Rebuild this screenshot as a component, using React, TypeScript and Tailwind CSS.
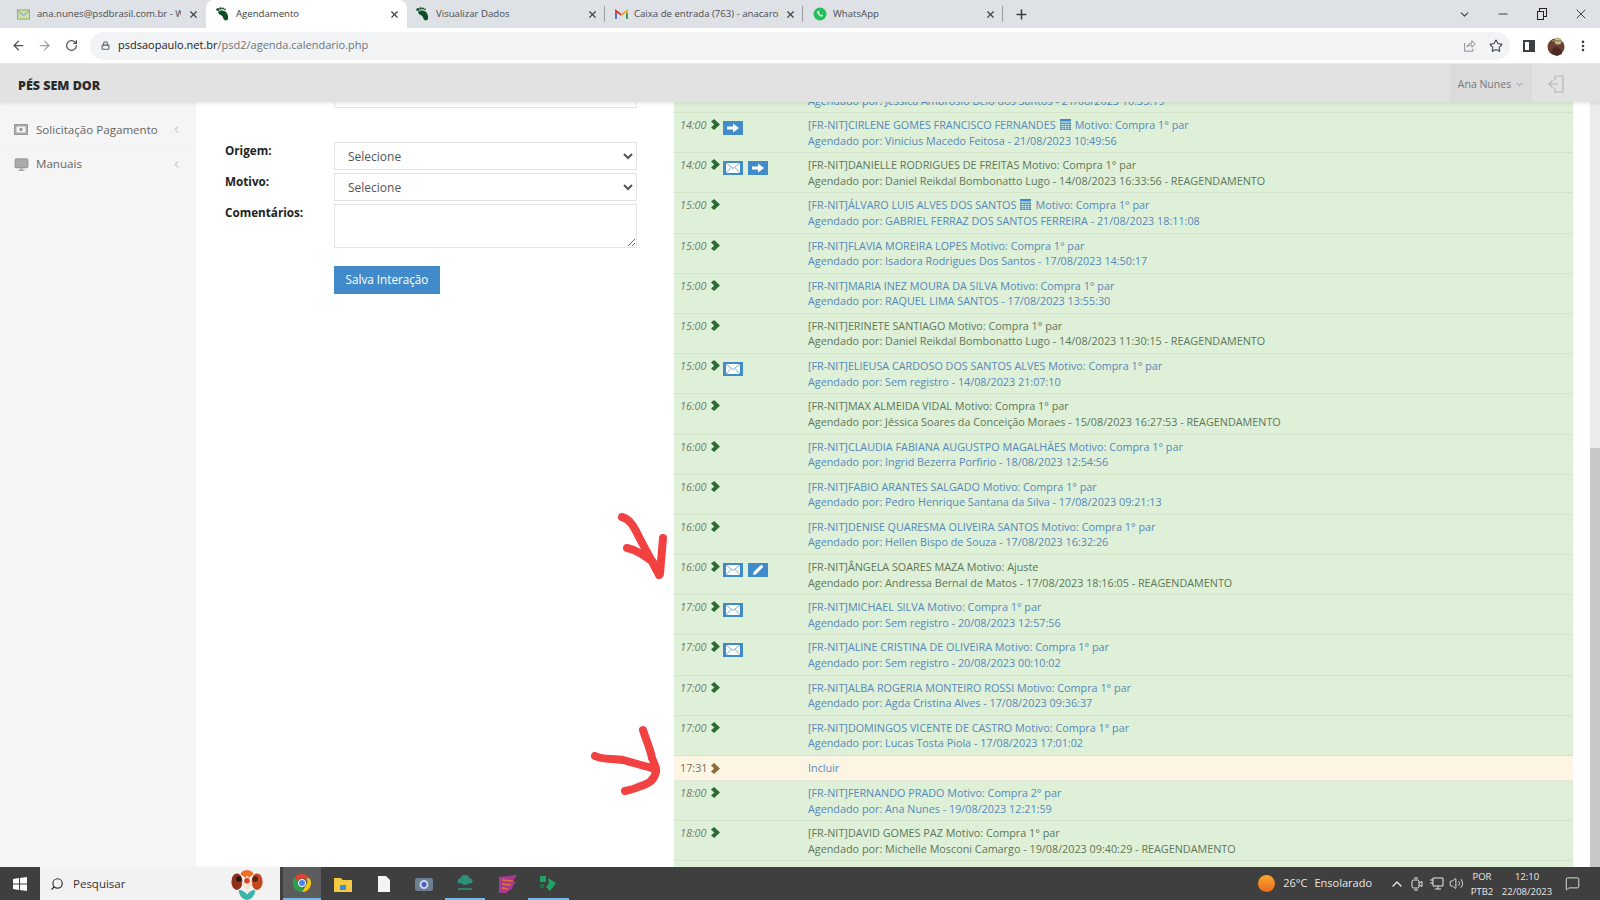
import React from 'react';
import { ArrowLeft, ArrowRight, RotateCw, Lock, Star, MoreVertical, X, Plus, ChevronDown, Minus, ChevronLeft, ChevronUp, Search, Volume2, MessageSquare, Monitor } from 'lucide-react';

const Foot = () => (
  <svg viewBox="0 0 14 14" className="w-[14px] h-[14px] shrink-0">
    <path d="M2.500 4.500C4 3 8 3 10 5c1.800 1.800 2.500 5 2 7-.4 1.500-3 2-4 .5C7 11 7 9.500 5.500 8.500 3.500 7.500 1.500 6 2.500 4.500z" fill="#0f4d26" />
    <circle cx="1.800" cy="2.500" r="1.500" fill="#0f4d26" />
    <circle cx="4.500" cy="1.500" r="1.200" fill="#0f4d26" />
    <circle cx="7" cy="1.500" r="1" fill="#0f4d26" />
    <circle cx="9" cy="2.300" r=".9" fill="#0f4d26" />
  </svg>
);

const MailFav = () => (
  <svg viewBox="0 0 14 14" className="w-[13px] h-[13px] shrink-0">
    <rect x=".5" y="2" width="13" height="10" fill="#c9dfa8" stroke="#9ab04e" />
    <path d="M1 3l6 5 6-5" fill="none" stroke="#6f8fb8" />
  </svg>
);

const GmailFav = () => (
  <svg viewBox="0 0 14 12" className="w-[13px] h-[11px] shrink-0">
    <path d="M1 11V2l6 4.500" fill="none" stroke="#d93a2b" strokeWidth="2" />
    <path d="M13 11V2L7 6.500" fill="none" stroke="#e8a92f" strokeWidth="2" />
    <path d="M1 11V5" stroke="#3f7fe0" strokeWidth="2" />
    <path d="M13 11V5" stroke="#2e9e55" strokeWidth="2" />
  </svg>
);

const WhatsFav = () => (
  <svg viewBox="0 0 14 14" className="w-[14px] h-[14px] shrink-0">
    <circle cx="7" cy="7" r="6.500" fill="#25c05a" />
    <path d="M4.800 4c-.8.800-.6 2.200.5 3.500 1.200 1.400 2.700 2.500 3.800 2 .6-.3.900-.8.900-1.200L8.600 7.500l-.7.700c-.7-.2-1.600-1.100-1.900-1.900l.6-.7L5.700 3.800c-.3 0-.6 0-.9.200z" fill="#fff" />
  </svg>
);

const tabs = [
  { w: 'w-[206px]', icon: <MailFav />, label: 'ana.nunes@psdbrasil.com.br - W', left: 'pl-[17px]', gap: 'gap-[7px]', sep: false, active: false },
  { w: 'w-[201px]', icon: <Foot />, label: 'Agendamento', left: 'pl-[10px]', gap: 'gap-[6px]', sep: false, active: true },
  { w: 'w-[198px]', icon: <Foot />, label: 'Visualizar Dados', left: 'pl-[9px]', gap: 'gap-[6px]', sep: true, active: false },
  { w: 'w-[198px]', icon: <GmailFav />, label: 'Caixa de entrada (763) - anacarol', left: 'pl-[10px]', gap: 'gap-[6px]', sep: true, active: false },
  { w: 'w-[200px]', icon: <WhatsFav />, label: 'WhatsApp', left: 'pl-[10px]', gap: 'gap-[6px]', sep: true, active: false },
];

type Row = { time: string; icons?: string[]; name: string; cal?: boolean; motivo?: string; by: string; dark?: boolean };

const m1 = 'Compra 1° par';
const rows: Row[] = [
  { time: '14:00', icons: ['arrow'], name: 'CIRLENE GOMES FRANCISCO FERNANDES', cal: true, by: 'Vinicius Macedo Feitosa - 21/08/2023 10:49:56' },
  { time: '14:00', icons: ['mail', 'arrow'], name: 'DANIELLE RODRIGUES DE FREITAS', by: 'Daniel Reikdal Bombonatto Lugo - 14/08/2023 16:33:56 - REAGENDAMENTO', dark: true },
  { time: '15:00', name: 'ÁLVARO LUIS ALVES DOS SANTOS', cal: true, by: 'GABRIEL FERRAZ DOS SANTOS FERREIRA - 21/08/2023 18:11:08' },
  { time: '15:00', name: 'FLAVIA MOREIRA LOPES', by: 'Isadora Rodrigues Dos Santos - 17/08/2023 14:50:17' },
  { time: '15:00', name: 'MARIA INEZ MOURA DA SILVA', by: 'RAQUEL LIMA SANTOS - 17/08/2023 13:55:30' },
  { time: '15:00', name: 'ERINETE SANTIAGO', by: 'Daniel Reikdal Bombonatto Lugo - 14/08/2023 11:30:15 - REAGENDAMENTO', dark: true },
  { time: '15:00', icons: ['mail'], name: 'ELIEUSA CARDOSO DOS SANTOS ALVES', by: 'Sem registro - 14/08/2023 21:07:10' },
  { time: '16:00', name: 'MAX ALMEIDA VIDAL', by: 'Jéssica Soares da Conceição Moraes - 15/08/2023 16:27:53 - REAGENDAMENTO', dark: true },
  { time: '16:00', name: 'CLAUDIA FABIANA AUGUSTPO MAGALHÃES', by: 'Ingrid Bezerra Porfirio - 18/08/2023 12:54:56' },
  { time: '16:00', name: 'FABIO ARANTES SALGADO', by: 'Pedro Henrique Santana da Silva - 17/08/2023 09:21:13' },
  { time: '16:00', name: 'DENISE QUARESMA OLIVEIRA SANTOS', by: 'Hellen Bispo de Souza - 17/08/2023 16:32:26' },
  { time: '16:00', icons: ['mail', 'pencil'], name: 'ÂNGELA SOARES MAZA', motivo: 'Ajuste', by: 'Andressa Bernal de Matos - 17/08/2023 18:16:05 - REAGENDAMENTO', dark: true },
  { time: '17:00', icons: ['mail'], name: 'MICHAEL SILVA', by: 'Sem registro - 20/08/2023 12:57:56' },
  { time: '17:00', icons: ['mail'], name: 'ALINE CRISTINA DE OLIVEIRA', by: 'Sem registro - 20/08/2023 00:10:02' },
  { time: '17:00', name: 'ALBA ROGERIA MONTEIRO ROSSI', by: 'Agda Cristina Alves - 17/08/2023 09:36:37' },
  { time: '17:00', name: 'DOMINGOS VICENTE DE CASTRO', by: 'Lucas Tosta Piola - 17/08/2023 17:01:02' },
];
const rowsAfter: Row[] = [
  { time: '18:00', name: 'FERNANDO PRADO', motivo: 'Compra 2° par', by: 'Ana Nunes - 19/08/2023 12:21:59' },
  { time: '18:00', name: 'DAVID GOMES PAZ', by: 'Michelle Mosconi Camargo - 19/08/2023 09:40:29 - REAGENDAMENTO', dark: true },
];

const Chevron = ({ color = '#2f6b35' }: { color?: string }) => (
  <svg viewBox="0 0 10 12" className="w-[9px] h-[11px] shrink-0">
    <path d="M3.500 0L10 6l-6.500 6L0 9.300 3.500 6 0 2.700z" fill={color} />
  </svg>
);

const Tile = ({ kind }: { kind: string }) => (
  <span className="w-5 h-[14px] bg-[#428bca] flex items-center justify-center shrink-0">
    {kind === 'mail' && (
      <svg viewBox="0 0 14 10" className="w-[14px] h-[10px]">
        <rect width="14" height="10" fill="#fff" />
        <path d="M0 0l7 5.500L14 0M0 10l5-5.500M14 10L9 4.500" fill="none" stroke="#6fa3d3" strokeWidth=".9" />
      </svg>
    )}
    {kind === 'arrow' && (
      <svg viewBox="0 0 12 10" className="w-3 h-[10px]">
        <path d="M0 3.500h6V.500L12 5 6 9.500v-3H0z" fill="#fff" />
      </svg>
    )}
    {kind === 'pencil' && (
      <svg viewBox="0 0 12 12" className="w-3 h-3">
        <path d="M1 11l.7-3L8.500 1.200a1 1 0 011.400 0l.9.9a1 1 0 010 1.400L4 10.300z" fill="#fff" />
      </svg>
    )}
  </span>
);

const CalIcon = () => (
  <svg viewBox="0 0 11 11" className="inline-block w-[11px] h-[11px] mx-[4px] align-[-1px]">
    <path d="M0 0h11v2.500H0z" fill="#428bca" />
    <path d="M0 3.500h11V11H0z" fill="#428bca" />
    <path d="M0 5.500h11M0 7.500h11M0 9.300h11M2.800 3.500V11M5.500 3.500V11M8.200 3.500V11" stroke="#dff0d8" strokeWidth=".6" />
  </svg>
);

const RowItem = ({ row }: { row: Row }) => {
  const color = row.dark ? 'text-[#5d7758]' : 'text-[#5589ba]';
  return (
    <div className="h-[40.2px] flex border-b border-[#d3e4cb] pt-[4px] pl-[6px] shrink-0">
      <div className="w-[128px] flex items-start">
        <span className="italic text-[#6f7e6a] w-[31px] leading-[16px]">{row.time}</span>
        <span className="mt-[2px]"><Chevron /></span>
        <span className="flex gap-[5px] ml-[3px] mt-[4px]">
          {(row.icons || []).map((k, i) => <Tile key={i} kind={k} />)}
        </span>
      </div>
      <div className={`leading-[15.5px] ${color}`}>
        <div>
          [FR-NIT]{row.name}
          {row.cal ? <CalIcon /> : ' '}
          Motivo: {row.motivo || m1}
        </div>
        <div>Agendado por: {row.by}</div>
      </div>
    </div>
  );
};

const Flower = () => (
  <svg viewBox="0 0 36 36" className="w-9 h-[33px]">
    <ellipse cx="7" cy="16" rx="6" ry="9" fill="#8c2f1b" />
    <ellipse cx="29" cy="16" rx="6" ry="9" fill="#c2491d" />
    <circle cx="9" cy="13" r="3" fill="#2a1410" />
    <circle cx="27" cy="13" r="3" fill="#5a1f10" />
    <path d="M11 8c1-6 13-6 14 0l-7 5z" fill="#ef6c25" />
    <path d="M18 9l6 9-6 8-6-8z" fill="#f6e3d2" />
    <circle cx="18" cy="15" r="3" fill="#d8412a" />
    <path d="M18 36c-5-1-9-5-9-11 4 0 7 2 9 5 2-3 5-5 9-5 0 6-4 10-9 11z" fill="#39b6a8" />
  </svg>
);

const ChromeLogo = () => (
  <svg viewBox="0 0 20 20" className="w-5 h-5">
    <path d="M10 1a9 9 0 017.800 4.500H10a4.500 4.500 0 00-4.200 3L3 4a9 9 0 017-3z" fill="#e0432f" />
    <path d="M17.800 5.500A9 9 0 0110 19l3.900-6.800a4.500 4.500 0 00.1-6.700z" fill="#f5c518" />
    <path d="M10 19A9 9 0 013 4l3.900 6.800a4.500 4.500 0 004.700 3z" fill="#2f9e4f" />
    <circle cx="10" cy="10" r="3.600" fill="#4a86e8" stroke="#fff" />
  </svg>
);

const App: React.FC = () => {
  return (
    <div className="h-screen w-full flex flex-col overflow-hidden bg-white font-['Open_Sans',sans-serif] text-[12px]">
      {/* Tabs */}
      <div className="h-[28px] bg-[#dee1e6] flex items-stretch shrink-0 text-[#4a4d52] text-[9.6px]">
        {tabs.map((t, i) => (
          <div key={i} className={`${t.w} ${t.left} ${t.gap} ${t.active ? 'bg-white rounded-t-lg text-[#3c4043]' : ''} flex items-center pr-[7px] relative shrink-0`}>
            {t.icon}
            <span className="flex-1 whitespace-nowrap overflow-hidden">{t.label}</span>
            <X size={11} strokeWidth={2.500} className="text-[#3c4043] shrink-0" />
            {t.sep && <span className="absolute right-0 top-[6px] h-[16px] w-px bg-[#9aa0a6]" />}
          </div>
        ))}
        <div className="flex items-center ml-[11px]"><Plus size={15} strokeWidth={2.500} className="text-[#3c4043]" /></div>
        <div className="flex-1 flex items-center justify-end text-[#3c4043] gap-[25px] pr-[11px]">
          <ChevronDown size={13} />
          <Minus size={14} />
          <span className="w-3 h-3 relative">
            <span className="absolute right-0 top-0 w-[8px] h-[9px] border border-[#222]" />
            <span className="absolute left-[2px] bottom-0 w-[7px] h-[9px] border border-[#222] bg-[#dee1e6]" />
          </span>
          <X size={16} strokeWidth={1.500} className="ml-[1px]" />
        </div>
      </div>

      {/* Toolbar */}
      <div className="h-[35px] bg-white flex items-center shrink-0 pl-[11px] text-[#5f6368]">
        <ArrowLeft size={15} strokeWidth={2} className="text-[#4b4e52]" />
        <ArrowRight size={15} strokeWidth={2} className="ml-[11px] text-[#9aa0a6]" />
        <RotateCw size={13} strokeWidth={2.200} className="ml-[13px] text-[#4b4e52]" />
        <div className="ml-[12px] w-[1420px] shrink-0 h-[28px] rounded-full bg-[#f1f3f4] flex items-center pl-[11px] pr-[7px]">
          <Lock size={9} strokeWidth={3} className="text-[#5f6368]" />
          <span className="ml-[8px] text-[11px] text-[#70757a]">
            <span className="text-[#202124]">psdsaopaulo.net.br</span>/psd2/agenda.calendario.php
          </span>
          <span className="flex-1" />
          <svg viewBox="0 0 16 16" className="w-[13px] h-[13px]" fill="none" stroke="#8a8d91" strokeWidth="1.200">
            <path d="M2 5v10h10v-3M5 10c0-3 3-5 6-5V2l4 4-4 4V7.500c-3 0-5 1-6 2.500z" />
          </svg>
          <Star size={14} strokeWidth={2} className="ml-[13px] text-[#4b4e52]" />
        </div>
        <svg viewBox="0 0 12 12" className="ml-[13px] w-3 h-3 shrink-0">
          <rect x="1" y="1" width="10" height="10" fill="none" stroke="#3c4043" strokeWidth="2" />
          <rect x="6" y="1" width="5" height="10" fill="#3c4043" />
        </svg>
        <svg viewBox="0 0 18 20" className="ml-[12px] w-[18px] h-5 shrink-0">
          <circle cx="9" cy="11" r="8.500" fill="#6a4032" />
          <circle cx="11" cy="5" r="3.500" fill="#c7b79a" />
          <path d="M5 4h9v1.500H5z" fill="#8f8a4e" />
          <path d="M4 17c1-5 4-7 6-6 3 1 5 4 5 7l-5 2z" fill="#4a2a22" />
        </svg>
        <MoreVertical size={14} strokeWidth={2.500} className="ml-[11px] shrink-0 text-[#3c4043]" />
      </div>

      {/* Site header */}
      <div className="h-[39px] bg-[#e2e2e2] flex items-stretch shrink-0 relative z-10 shadow-[0_2px_3px_rgba(0,0,0,0.08)] border-t border-[#e8e8e8]">
        <div className="flex items-center pl-[18px] pt-[6px] text-[12.5px] font-black text-[#2b2b2b]">PÉS SEM DOR</div>
        <div className="flex-1" />
        <div className="w-[82px] bg-[#dbdbdb] flex items-center justify-center gap-[4px] pt-[3px] text-[#777] text-[10.500px]">
          Ana Nunes <ChevronDown size={9} />
        </div>
        <div className="w-[68px] flex items-center pl-[16px] pt-[2px]">
          <svg viewBox="0 0 16 18" className="w-4 h-[18px]" fill="none" stroke="#b5b5b5" strokeWidth="1.200">
            <path d="M7 1h8v16H7v-4M7 5V1M10 9H1M4.500 5.500L1 9l3.500 3.500" />
          </svg>
        </div>
      </div>

      {/* Body */}
      <div className="flex-1 min-h-0 flex relative">
        <aside className="w-[196px] shrink-0 bg-[#f5f5f5] text-[#666] text-[11.6px]">
          <div className="h-[45px] pt-[11px] flex items-center pl-[14px] pr-[14px] border-b border-[#f0f0f0]">
            <svg viewBox="0 0 14 11" className="w-[14px] h-[11px]" fill="none">
              <rect x=".5" y=".5" width="13" height="10" fill="#aaa" stroke="#999" />
              <rect x="2.500" y="2.500" width="9" height="6" fill="#f5f5f5" />
              <circle cx="7" cy="5.500" r="1.800" fill="#999" />
            </svg>
            <span className="ml-[8px] flex-1">Solicitação Pagamento</span>
            <ChevronLeft size={11} className="text-[#aaa]" />
          </div>
          <div className="h-[34px] flex items-center pl-[14px] pr-[14px]">
            <Monitor size={15} className="text-[#999]" fill="#aaa" />
            <span className="ml-[7px] flex-1">Manuais</span>
            <ChevronLeft size={11} className="text-[#aaa]" />
          </div>
        </aside>

        <section className="w-[478px] shrink-0 pl-[29px] pr-[37px]">
          <div className="ml-[109px] h-[6px] border border-t-0 border-[#e4e4e4]" />
          <div className="mt-[34px] flex flex-col gap-[3px]">
            {['Origem:', 'Motivo:'].map(l => (
              <div key={l} className="flex">
                <label className="w-[109px] -mt-px font-bold text-[#222] text-[11.7px] leading-[18px]">{l}</label>
                <select className="flex-1 h-[28px] border border-[#e4e4e4] bg-white pl-[9px] text-[12px] text-[#555]">
                  <option>Selecione</option>
                </select>
              </div>
            ))}
            <div className="flex">
              <label className="w-[109px] -mt-px font-bold text-[#222] text-[11.7px] leading-[18px]">Comentários:</label>
              <textarea className="flex-1 h-[44px] border border-[#e4e4e4] bg-white" />
            </div>
            <div className="ml-[109px] mt-[15px]">
              <button className="w-[106px] h-[28px] bg-[#428bca] text-white text-[11.7px]">Salva Interação</button>
            </div>
          </div>
        </section>

        <section className="w-[899px] shrink-0 bg-[#dff0d8] overflow-hidden text-[10.8px]">
          <div className="h-[11px] overflow-hidden border-b border-[#d3e4cb] text-[#5589ba] leading-[15.500px] pl-[134px]">
            <div className="-mt-[9px]">Agendado por: Jéssica Ambrósio Belo dos Santos - 21/08/2023 10:35:19</div>
          </div>
          {rows.map((r, i) => <RowItem key={i} row={r} />)}
          <div className="h-[25px] bg-[#fdf5e3] flex items-center pl-[6px] border-b border-[#e6e6d8]">
            <div className="w-[128px] flex items-center">
              <span className="text-[#77705f] w-[31px]">17:31</span>
              <Chevron color="#8a6d3b" />
            </div>
            <span className="text-[#5589ba]">Incluir</span>
          </div>
          {rowsAfter.map((r, i) => <RowItem key={i} row={r} />)}
        </section>

        <div className="flex-1 bg-white" />
        <div className="w-[10px] shrink-0 flex flex-col bg-[#ebebeb]">
          <div className="h-[346px]" />
          <div className="flex-1 bg-[#c8c8c8]" />
        </div>

        {/* hand drawn arrows on top of the screenshot */}
        <svg viewBox="0 102 1600 765" className="absolute inset-0 w-[1600px] h-[765px] pointer-events-none" fill="none" stroke="#f24141" strokeWidth="8" strokeLinecap="round" strokeLinejoin="round">
          <path d="M622 517c8 2 12 10 16 18 6 12 14 26 20 38M627 548c10 2 18 8 26 14 3 4 5 9 6 13M663 538c-1 12-2 24-3 36" />
          <path d="M595 756c8 4 18 2 28 4 10 3 22 6 32 9M643 730c3 10 7 18 9 28 2 6 5 9 4 14-2 9-8 12-18 15-4 2-8 3-13 4" />
        </svg>
      </div>

      {/* Taskbar */}
      <div className="h-[33px] bg-[#3f3f3f] shrink-0 flex items-stretch text-[#e8e8e8]">
        <div className="w-[40px] flex items-center justify-center">
          <svg viewBox="0 0 14 14" className="w-[14px] h-[14px]"><path d="M0 2l6-.9V6.500H0zM7 1L14 0v6.500H7zM0 7.500h6v5.400l-6-.9zM7 7.500h7V14l-7-1z" fill="#fff" /></svg>
        </div>
        <div className="w-[240px] bg-[#f2f2f2] flex items-center pl-[10px] pr-[15px] text-[#333] text-[11.5px]">
          <Search size={14} className="-scale-x-100" />
          <span className="ml-[9px] flex-1">Pesquisar</span>
          <Flower />
        </div>
        <div className="w-[38px] bg-[#5c5c5c] flex items-center justify-center border-b-2 border-[#76b9ed] ml-[3px]"><ChromeLogo /></div>
        <div className="w-[40.5px] ml-[2px] flex items-center justify-center">
          <svg viewBox="0 0 18 16" className="w-[18px] h-4"><path d="M0 2h7l1.500 2H18v12H0z" fill="#f6c945" /><path d="M6 9h6v5H6z" fill="#3d8fd1" /></svg>
        </div>
        <div className="w-[40.5px] flex items-center justify-center">
          <svg viewBox="0 0 12 16" className="w-3 h-4"><path d="M0 0h8l4 4v12H0z" fill="#f4f4f4" /></svg>
        </div>
        <div className="w-[40.5px] flex items-center justify-center">
          <svg viewBox="0 0 18 15" className="w-[18px] h-[15px]"><rect y="2" width="18" height="13" rx="2" fill="#6e7f91" /><circle cx="9" cy="8.500" r="4.500" fill="#c9d4ea" /><circle cx="9" cy="8.500" r="2.500" fill="#5058c8" /></svg>
        </div>
        <div className="w-[40.5px] flex items-center justify-center border-b-2 border-[#76b9ed]">
          <svg viewBox="0 0 18 18" className="w-[18px] h-[18px]"><circle cx="9" cy="6" r="5" fill="#2d8f7d" /><circle cx="4" cy="7" r="2.500" fill="#2d8f7d" /><circle cx="14" cy="7" r="2.500" fill="#2d8f7d" /><path d="M2 14h14v2H2z" fill="#2d7f70" /></svg>
        </div>
        <div className="w-[40.5px] ml-[2.5px] flex items-center justify-center">
          <svg viewBox="0 0 20 18" className="w-5 h-[18px]"><path d="M1 2l18-2-4 6 3 1-4 5 1 1-7 5H1z" fill="#a93a94" /><path d="M4 5l11 1M4 9l9 1M4 13l6 1" stroke="#e2703a" strokeWidth="1.500" /></svg>
        </div>
        <div className="w-[40.5px] flex items-center justify-center border-b-2 border-[#76b9ed]">
          <svg viewBox="0 0 18 18" className="w-[18px] h-[18px]"><path d="M1 2h6v6H1zM9 4l8 5-6 8-4-4 3-4z" fill="#1fa463" /><path d="M1 10h4v4H1z" fill="#15764a" /></svg>
        </div>

        <div className="flex-1 flex items-center justify-end text-[11px]">
          <span className="w-[17px] h-[17px] rounded-full bg-gradient-to-b from-[#fba72c] to-[#e96a1f]" />
          <span className="ml-[8px]">26°C</span>
          <span className="ml-[7px]">Ensolarado</span>
          <ChevronUp size={16} className="ml-[17px]" />
          <svg viewBox="0 0 12 14" className="ml-[6px] w-3 h-[14px]" fill="none" stroke="#e8e8e8"><rect x="1" y="3" width="7" height="8" rx="1.500" /><path d="M8 6l3-1.500v5L8 8M3 1h4M3 13h4" /></svg>
          <svg viewBox="0 0 14 13" className="ml-[7px] w-[14px] h-[13px]" fill="none" stroke="#e8e8e8"><path d="M3 1h10v8H3zM8 9v3M5 12h6M0 3h3M0 6h3" /></svg>
          <Volume2 size={15} className="ml-[5px]" strokeWidth={1.500} />
          <div className="ml-[4px] w-[28px] text-center text-[9.5px] leading-[15px]">POR<br />PTB2</div>
          <div className="w-[62px] text-center text-[9.5px] leading-[15px]">12:10<br />22/08/2023</div>
          <MessageSquare size={15} strokeWidth={1.500} className="ml-[7px] mr-[20px]" />
        </div>
      </div>
    </div>
  );
};

export default App;
